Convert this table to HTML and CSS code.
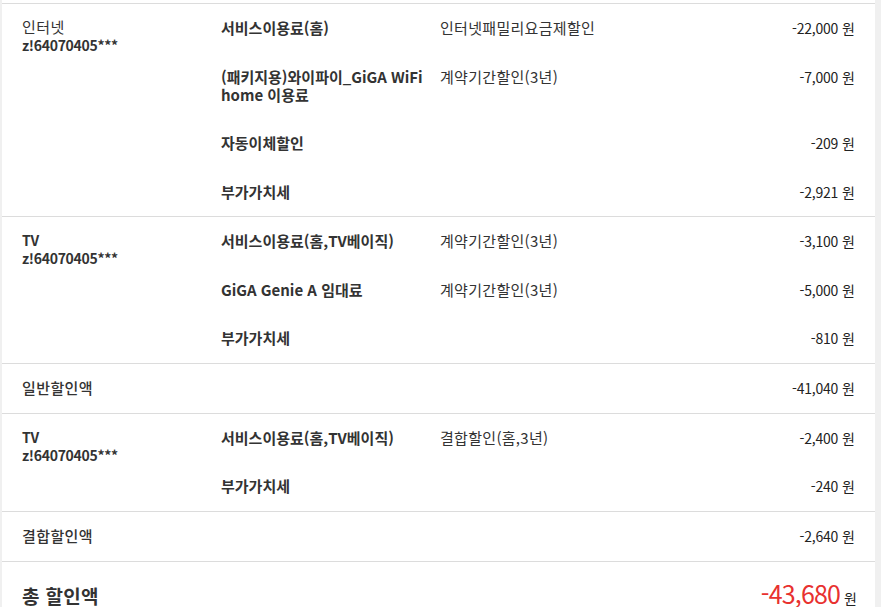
FILE: index.html
```html
<!DOCTYPE html>
<html lang="ko">
<head>
<meta charset="utf-8">
<link rel="stylesheet" href="styles.css">
</head>
<body>
<div class="panel">
  <section class="group">
    <div class="label"><span class="kr">인터넷</span><br><b>z!64070405***</b></div>
    <div class="rows">
      <div class="row"><div class="svc">서비스이용료(홈)</div><div class="disc">인터넷패밀리요금제할인</div><div class="amt"><span class="num">-22,000</span> 원</div></div>
      <div class="row"><div class="svc">(패키지용)와이파이_GiGA WiFi home 이용료</div><div class="disc">계약기간할인(3년)</div><div class="amt"><span class="num">-7,000</span> 원</div></div>
      <div class="row"><div class="svc">자동이체할인</div><div class="disc"></div><div class="amt"><span class="num">-209</span> 원</div></div>
      <div class="row"><div class="svc">부가가치세</div><div class="disc"></div><div class="amt"><span class="num">-2,921</span> 원</div></div>
    </div>
  </section>
  <section class="group">
    <div class="label"><b>TV</b><br><b>z!64070405***</b></div>
    <div class="rows">
      <div class="row"><div class="svc">서비스이용료(홈,TV베이직)</div><div class="disc">계약기간할인(3년)</div><div class="amt"><span class="num">-3,100</span> 원</div></div>
      <div class="row"><div class="svc">GiGA Genie A 임대료</div><div class="disc">계약기간할인(3년)</div><div class="amt"><span class="num">-5,000</span> 원</div></div>
      <div class="row"><div class="svc">부가가치세</div><div class="disc"></div><div class="amt"><span class="num">-810</span> 원</div></div>
    </div>
  </section>
  <section class="group sum">
    <div class="sum-label">일반할인액</div>
    <div class="amt"><span class="num">-41,040</span> 원</div>
  </section>
  <section class="group">
    <div class="label"><b>TV</b><br><b>z!64070405***</b></div>
    <div class="rows">
      <div class="row"><div class="svc">서비스이용료(홈,TV베이직)</div><div class="disc">결합할인(홈,3년)</div><div class="amt"><span class="num">-2,400</span> 원</div></div>
      <div class="row"><div class="svc">부가가치세</div><div class="disc"></div><div class="amt"><span class="num">-240</span> 원</div></div>
    </div>
  </section>
  <section class="group sum">
    <div class="sum-label">결합할인액</div>
    <div class="amt"><span class="num">-2,640</span> 원</div>
  </section>
  <section class="group total">
    <div class="total-label">총 할인액</div>
    <div class="total-amt"><span class="big">-43,680</span> 원</div>
  </section>
</div>
</body>
</html>
```

FILE: styles.css
```css
html, body {
  margin: 0;
  padding: 0;
}
body {
  background: #f0f0f0;
  font-family: "Noto Sans CJK KR", "Noto Sans", sans-serif;
  font-size: 14px;
  color: #333;
  overflow: hidden;
  height: 607px;
}
.panel {
  margin-left: 2px;
  width: 873px;
  background: #fff;
  padding-top: 3px;
  min-height: 604px;
}
.group {
  display: flex;
  border-top: 1px solid #dcdcdc;
  padding: 0 20px;
}
.label {
  width: 199px;
  flex: none;
  padding-top: 14px;
  line-height: 18px;
  letter-spacing: -0.3px;
}
.label .kr {
  font-size: 15px;
  letter-spacing: 0.4px;
}
.label b {
  font-weight: 700;
}
.rows {
  flex: 1;
  display: flex;
  flex-direction: column;
}
.row {
  display: grid;
  grid-template-columns: 219px 1fr auto;
  padding: 15px 0 15.5px;
  line-height: 18px;
  align-items: start;
}
.svc {
  font-size: 15px;
  font-weight: 700;
  padding-right: 14px;
  line-height: 18px;
}
.disc {
  font-size: 15px;
  font-weight: 400;
  letter-spacing: 0.3px;
  line-height: 18px;
}
.amt {
  text-align: right;
  color: #222;
  white-space: nowrap;
  line-height: 18px;
}
.num {
  letter-spacing: -0.2px;
}
.sum {
  justify-content: space-between;
  padding-top: 15px;
  padding-bottom: 16px;
  line-height: 18px;
}
.sum-label {
  font-size: 15px;
  font-weight: 500;
  letter-spacing: 0.4px;
}
.total {
  justify-content: space-between;
  align-items: baseline;
  padding-top: 13px;
}
.total-label {
  font-size: 19px;
  font-weight: 700;
  line-height: 28px;
  letter-spacing: 0.3px;
}
.total-amt {
  color: #222;
  font-size: 14px;
  margin-right: -2px;
}
.total-amt .big {
  color: #e8312f;
  font-size: 25px;
  letter-spacing: -0.8px;
}
```
